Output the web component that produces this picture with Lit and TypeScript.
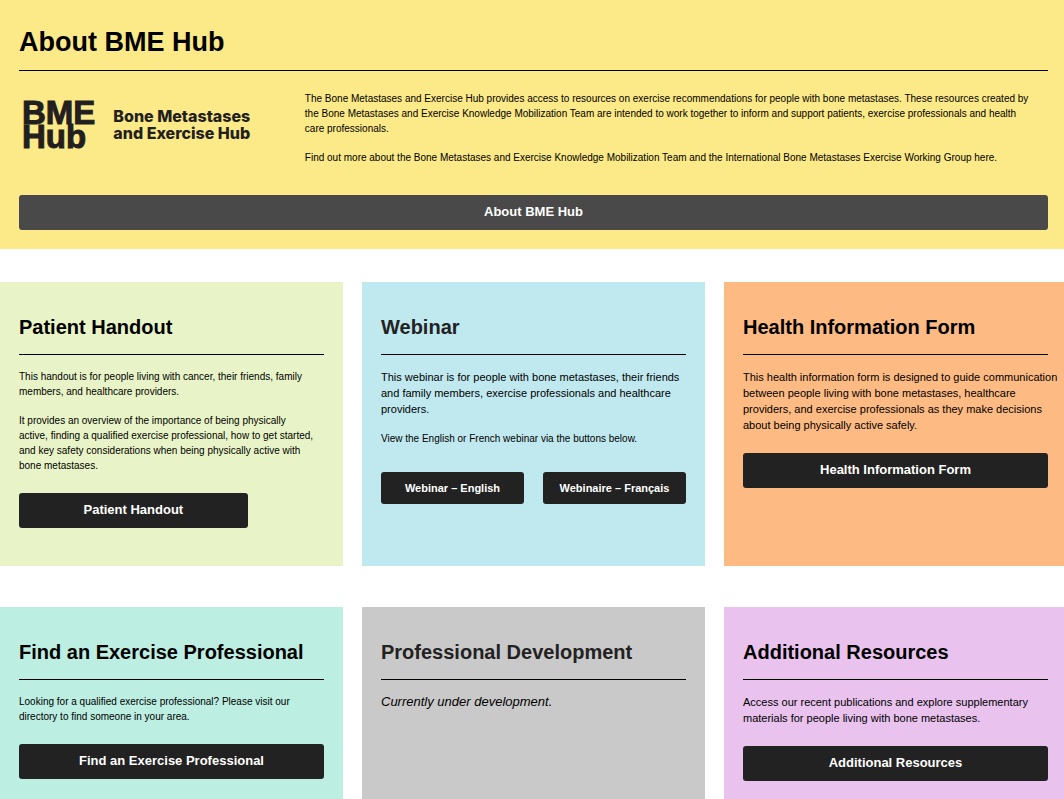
import { LitElement, html, css, nothing } from "lit";
import { customElement } from "lit/decorators.js";
import { classMap } from "lit/directives/class-map.js";

type Size = "small" | "medium" | "large";

interface Card {
  title: string;
  tone: string;
  soft?: boolean;
  text: { size: Size; lines: string[] }[];
  actions: string[];
  layout?: "narrow" | "pair";
}

const cards: Card[] = [
  {
    title: "Patient Handout",
    tone: "green",
    text: [
      {
        size: "small",
        lines: [
          "This handout is for people living with cancer, their friends, family",
          "members, and healthcare providers.",
        ],
      },
      {
        size: "small",
        lines: [
          "It provides an overview of the importance of being physically",
          "active, finding a qualified exercise professional, how to get started,",
          "and key safety considerations when being physically active with",
          "bone metastases.",
        ],
      },
    ],
    actions: ["Patient Handout"],
    layout: "narrow",
  },
  {
    title: "Webinar",
    tone: "blue",
    soft: true,
    text: [
      {
        size: "medium",
        lines: [
          "This webinar is for people with bone metastases, their friends",
          "and family members, exercise professionals and healthcare",
          "providers.",
        ],
      },
      { size: "small", lines: ["View the English or French webinar via the buttons below."] },
    ],
    actions: ["Webinar – English", "Webinaire – Français"],
    layout: "pair",
  },
  {
    title: "Health Information Form",
    tone: "orange",
    text: [
      {
        size: "medium",
        lines: [
          "This health information form is designed to guide communication",
          "between people living with bone metastases, healthcare",
          "providers, and exercise professionals as they make decisions",
          "about being physically active safely.",
        ],
      },
    ],
    actions: ["Health Information Form"],
  },
  {
    title: "Find an Exercise Professional",
    tone: "mint",
    text: [
      {
        size: "small",
        lines: [
          "Looking for a qualified exercise professional? Please visit our",
          "directory to find someone in your area.",
        ],
      },
    ],
    actions: ["Find an Exercise Professional"],
  },
  {
    title: "Professional Development",
    tone: "grey",
    soft: true,
    text: [{ size: "large", lines: ["Currently under development."] }],
    actions: [],
  },
  {
    title: "Additional Resources",
    tone: "purple",
    text: [
      {
        size: "medium",
        lines: [
          "Access our recent publications and explore supplementary",
          "materials for people living with bone metastases.",
        ],
      },
    ],
    actions: ["Additional Resources"],
  },
];

@customElement("app-root")
export class AppRoot extends LitElement {
  static styles = css`
    :host {
      display: block;
      overflow-x: hidden;
      background: #fff;
      color: #000;
      font-family: "Liberation Sans", Arial, sans-serif;
    }
    h1,
    h2,
    p {
      margin: 0;
    }
    .page {
      width: calc(100% + 3px);
    }
    .about {
      background: #fce987;
      padding: 24px 19px 19px;
    }
    h1 {
      font-size: 27px;
      line-height: 36px;
      padding-bottom: 10px;
      border-bottom: 1px solid #000;
    }
    .intro {
      display: grid;
      grid-template-columns: 5fr 13fr;
      padding: 20px 0 30px;
    }
    .logo {
      display: flex;
      align-items: flex-start;
      gap: 18px;
      padding: 10px 0 0 3px;
      color: #231f20;
    }
    .mark {
      font-size: 33px;
      font-weight: 700;
      line-height: 24px;
      -webkit-text-stroke: 1px #231f20;
    }
    .name {
      padding-top: 7px;
      font-family: Inter, sans-serif;
      font-size: 16px;
      font-weight: 800;
      line-height: 17px;
    }
    .mark span,
    .name span {
      display: block;
      white-space: nowrap;
    }
    .small {
      font-size: 10px;
      line-height: 15px;
    }
    .medium {
      font-size: 11px;
      line-height: 16px;
    }
    .large {
      font-size: 13px;
      line-height: 16px;
      font-style: italic;
    }
    .copy {
      display: grid;
      gap: 14px;
      align-content: start;
    }
    .copy p {
      white-space: pre;
    }
    .grid {
      display: grid;
      grid-template-columns: repeat(3, 1fr);
      gap: 41px 19px;
      padding-top: 33px;
    }
    .card {
      min-width: 0;
      box-sizing: border-box;
      padding: 32px 19px 38px;
    }
    h2 {
      font-size: 20px;
      line-height: 26px;
      padding-bottom: 14px;
      margin-bottom: 14px;
      border-bottom: 1px solid #000;
    }
    .soft h2 {
      color: #222;
    }
    .actions {
      display: grid;
      gap: 19px;
      padding-top: 20px;
    }
    .narrow {
      grid-template-columns: 3fr 1fr;
      gap: 0;
    }
    .pair {
      grid-template-columns: 1fr 1fr;
      padding-top: 26px;
    }
    .button {
      display: block;
      padding: 8px 0 9px;
      border-radius: 3px;
      background: #222;
      color: #fff;
      font-size: 13px;
      font-weight: 700;
      line-height: 18px;
      text-align: center;
      text-decoration: none;
      white-space: nowrap;
    }
    .pair .button {
      padding: 8px 0;
      font-size: 11px;
      line-height: 16px;
    }
    .muted {
      background: #494949;
    }
    .green {
      background: #e8f4c7;
    }
    .blue {
      background: #c0e9ef;
    }
    .orange {
      background: #fdba83;
    }
    .mint {
      background: #bceee1;
    }
    .grey {
      background: #c9c9c9;
    }
    .purple {
      background: #e9c2ee;
    }
    @media (max-width: 1040px) {
      .copy p {
        white-space: normal;
      }
    }
  `;

  private paragraph(size: Size, lines: string[]) {
    return html`<p class=${size}>${lines.join(" \n")}</p>`;
  }

  private card(c: Card) {
    return html`
      <section class=${classMap({ card: true, [c.tone]: true, soft: !!c.soft })}>
        <h2>${c.title}</h2>
        <div class="copy">${c.text.map((t) => this.paragraph(t.size, t.lines))}</div>
        ${c.actions.length
          ? html`<div class="actions ${c.layout ?? ""}">
              ${c.actions.map((a) => html`<a class="button" href="#">${a}</a>`)}
            </div>`
          : nothing}
      </section>
    `;
  }

  render() {
    return html`
      <main class="page">
        <section class="about">
          <h1>About BME Hub</h1>
          <div class="intro">
            <div class="logo">
              <div class="mark"><span>BME</span><span>Hub</span></div>
              <div class="name"><span>Bone Metastases</span><span>and Exercise Hub</span></div>
            </div>
            <div class="copy">
              ${this.paragraph("small", [
                "The Bone Metastases and Exercise Hub provides access to resources on exercise recommendations for people with bone metastases. These resources created by",
                "the Bone Metastases and Exercise Knowledge Mobilization Team are intended to work together to inform and support patients, exercise professionals and health",
                "care professionals.",
              ])}
              ${this.paragraph("small", [
                "Find out more about the Bone Metastases and Exercise Knowledge Mobilization Team and the International Bone Metastases Exercise Working Group here.",
              ])}
            </div>
          </div>
          <a class="button muted" href="#">About BME Hub</a>
        </section>
        <div class="grid">${cards.map((c) => this.card(c))}</div>
      </main>
    `;
  }
}
